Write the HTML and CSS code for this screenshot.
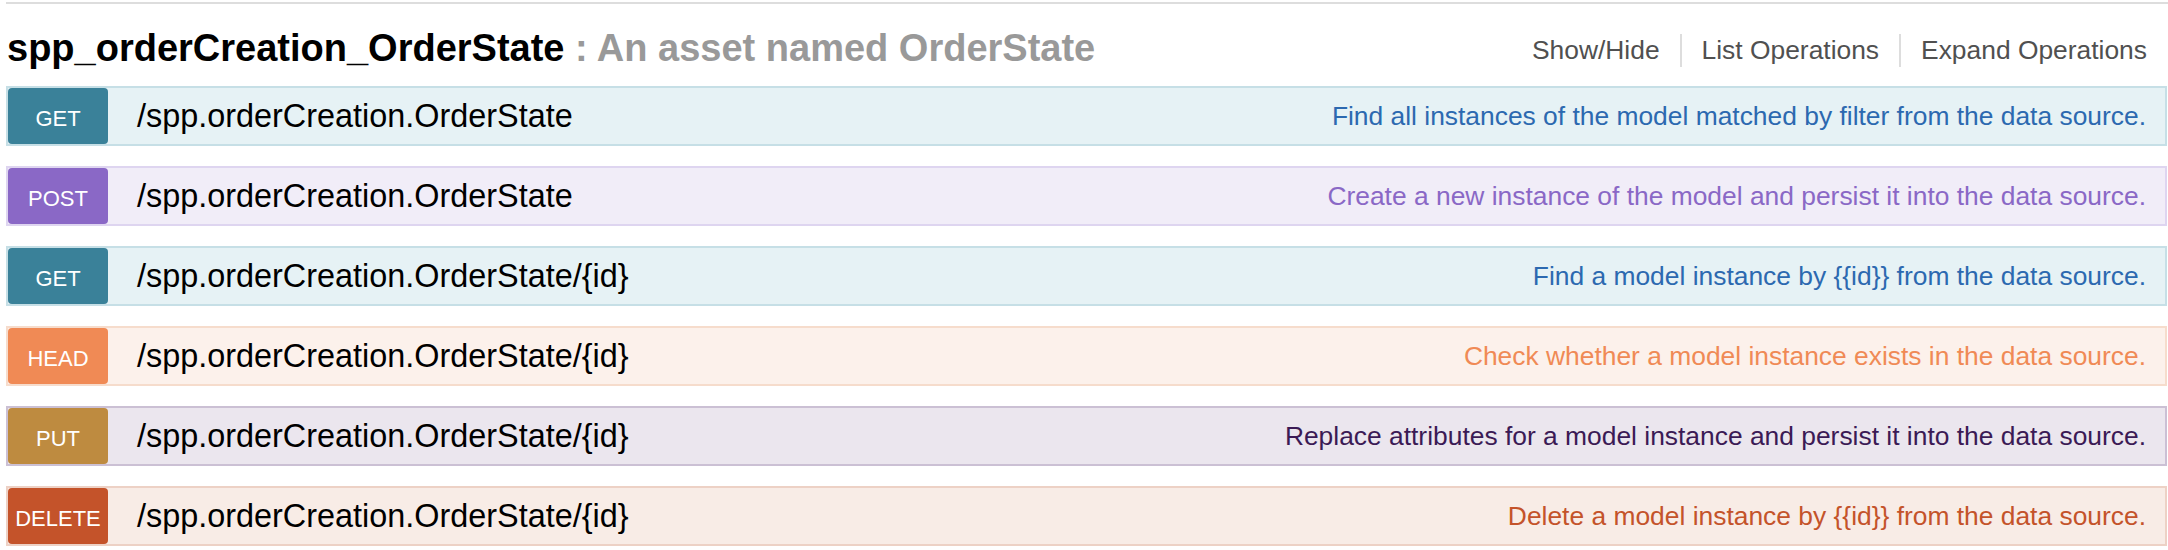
FILE: index.html
```html
<!DOCTYPE html>
<html lang="en">
<head>
<meta charset="utf-8">
<title>spp_orderCreation_OrderState</title>
<link rel="stylesheet" href="styles.css">
</head>
<body>
<div class="resource">
  <div class="topline"></div>
  <div class="heading">
    <h2 class="title"><span class="name">spp_orderCreation_OrderState</span><span class="desc"> : An asset named OrderState</span></h2>
    <ul class="options">
      <li>Show/Hide</li>
      <li>List Operations</li>
      <li>Expand Operations</li>
    </ul>
  </div>
  <ul class="endpoints">
    <li class="op get">
      <span class="method">GET</span>
      <span class="path">/spp.orderCreation.OrderState</span>
      <span class="summary">Find all instances of the model matched by filter from the data source.</span>
    </li>
    <li class="op post">
      <span class="method">POST</span>
      <span class="path">/spp.orderCreation.OrderState</span>
      <span class="summary">Create a new instance of the model and persist it into the data source.</span>
    </li>
    <li class="op get">
      <span class="method">GET</span>
      <span class="path">/spp.orderCreation.OrderState/{id}</span>
      <span class="summary">Find a model instance by {{id}} from the data source.</span>
    </li>
    <li class="op head">
      <span class="method">HEAD</span>
      <span class="path">/spp.orderCreation.OrderState/{id}</span>
      <span class="summary">Check whether a model instance exists in the data source.</span>
    </li>
    <li class="op put">
      <span class="method">PUT</span>
      <span class="path">/spp.orderCreation.OrderState/{id}</span>
      <span class="summary">Replace attributes for a model instance and persist it into the data source.</span>
    </li>
    <li class="op delete">
      <span class="method">DELETE</span>
      <span class="path">/spp.orderCreation.OrderState/{id}</span>
      <span class="summary">Delete a model instance by {{id}} from the data source.</span>
    </li>
  </ul>
</div>
</body>
</html>
```
FILE: styles.css
```css
html, body {
  margin: 0;
  padding: 0;
  background: #fff;
}

body {
  font-family: "Liberation Sans", Arial, Helvetica, sans-serif;
  color: #000;
}

.resource {
  padding: 0 1px 0 6px;
}

.topline {
  margin-top: 2px;
  margin-right: -1px;
  border-top: 2px solid #dddddd;
}

.heading {
  display: flex;
  justify-content: space-between;
  align-items: flex-start;
  padding: 21px 0 15px 1px;
}

.title {
  margin: 0;
  font-size: 38px;
  line-height: 46px;
  font-weight: bold;
  white-space: nowrap;
}

.title .name {
  color: #000;
}

.title .desc {
  color: #999999;
}

.options {
  display: flex;
  list-style: none;
  margin: 9px 0 0;
  padding: 0;
}

.options li {
  font-size: 26.4px;
  line-height: 33px;
  color: #505050;
  padding: 0 20px;
  border-right: 2px solid #dddddd;
  white-space: nowrap;
}

.options li:last-child {
  border-right: none;
  padding-right: 20px;
}

.endpoints {
  list-style: none;
  margin: 0;
  padding: 0;
}

.op {
  display: flex;
  align-items: center;
  height: 56px;
  border: 2px solid;
  margin-bottom: 20px;
}

.method {
  flex: none;
  width: 100px;
  height: 50px;
  padding-top: 6px;
  line-height: 50px;
  text-align: center;
  border-radius: 4px;
  color: #fff;
  font-size: 22px;
}

.path {
  flex: none;
  padding-left: 29px;
  font-size: 32.4px;
  line-height: 56px;
  color: #000;
  white-space: nowrap;
}

.summary {
  flex: 1;
  text-align: right;
  padding-right: 19px;
  font-size: 26.4px;
  line-height: 56px;
  white-space: nowrap;
}

.get { background: #e6f2f5; border-color: #c6dfe6; }
.get .method { background: #3a8199; }
.get .summary { color: #2c69b0; }

.post { background: #f1edf8; border-color: #ded5f0; }
.post .method { background: #8a68c6; }
.post .summary { color: #8a68c6; }

.head { background: #fcf1eb; border-color: #f6dccc; }
.head .method { background: #f08a55; }
.head .summary { color: #f08a55; }

.put { background: #ebe6ee; border-color: #cbc0d4; }
.put .method { background: #be8b40; }
.put .summary { color: #3b1a55; }

.delete { background: #f8ece6; border-color: #edd1c5; }
.delete .method { background: #c4532a; }
.delete .summary { color: #c4532a; }
```
